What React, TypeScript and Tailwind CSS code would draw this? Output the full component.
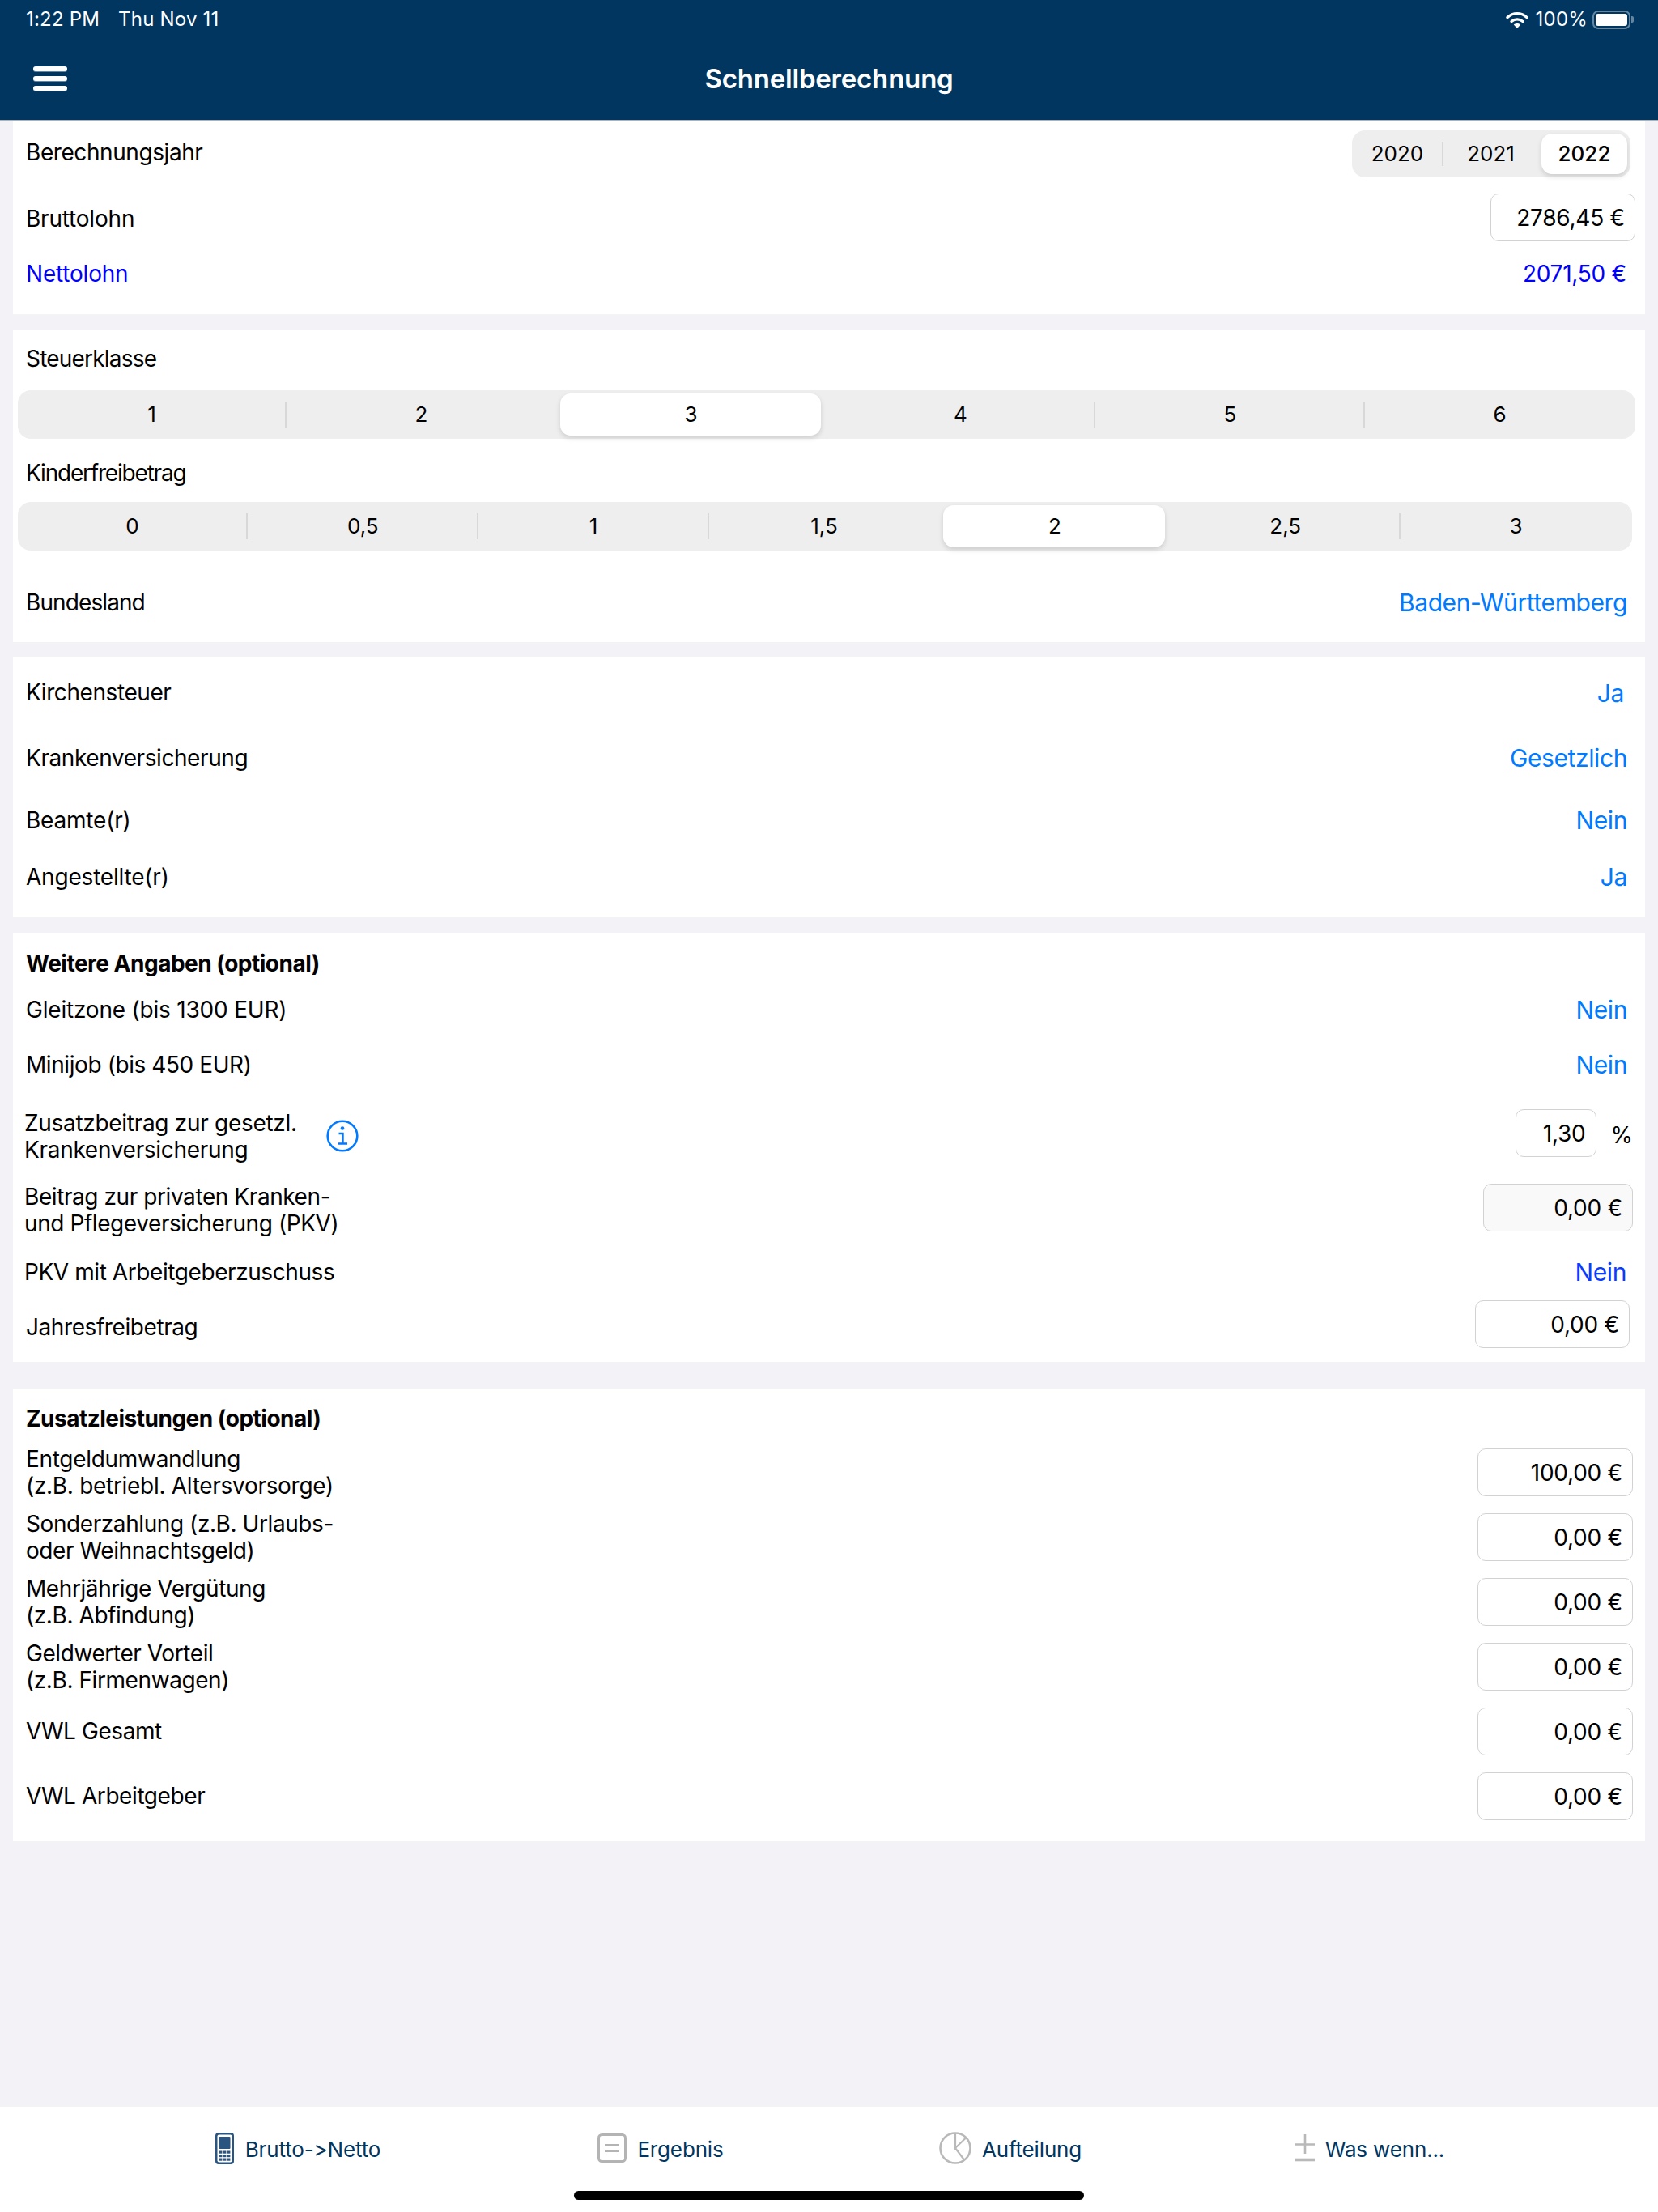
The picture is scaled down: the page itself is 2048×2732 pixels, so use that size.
import React from "react";

const FONT = "[font-family:Inter,'Noto_Sans',sans-serif]";

function Row({ className = "", children }: { className?: string; children: React.ReactNode }) {
  return <div className={"flex items-center justify-between " + className}>{children}</div>;
}

function Label({
  children,
  className = "",
  tone = "text-black",
  track = "tracking-[-0.42px]",
}: {
  children: React.ReactNode;
  className?: string;
  tone?: string;
  track?: string;
}) {
  return <div className={"text-[28px] leading-[33px] " + track + " " + tone + " " + className}>{children}</div>;
}

function Link({ children, className = "", tone = "text-[#007aff]" }: { children: React.ReactNode; className?: string; tone?: string }) {
  return <div className={"text-[30px] leading-[36px] tracking-[-0.4px] " + tone + " " + className}>{children}</div>;
}

function Field({ value, className = "" }: { value: string; className?: string }) {
  return (
    <div className={"flex h-[59px] items-center justify-end rounded-[10px] border border-[#d2d2d2] pr-[12px] text-[28px] tracking-[-0.25px] text-black " + className}>
      {value}
    </div>
  );
}

function Segmented({ items, selected, dividers, selectedInset, className = "" }: { items: string[]; selected: number; dividers: number[]; selectedInset: string; className?: string }) {
  return (
    <div className={"flex h-[60px] items-stretch rounded-[16px] bg-[#eeeeee] py-[4px] " + className}>
      {items.map((t, i) => (
        <div key={t} className="relative flex flex-1 items-center justify-center text-[26px] text-black">
          {i === selected && <div className={"absolute inset-y-0 rounded-[13px] bg-white shadow-[0_3px_6px_rgba(0,0,0,0.14)] " + selectedInset} />}
          <span className="relative -mt-[1px] -ml-[2px]">{t}</span>
          {dividers.includes(i) && <div className="absolute right-[1px] top-[10px] bottom-[10px] w-[2px] bg-[#d8d8d8]" />}
        </div>
      ))}
    </div>
  );
}

function Wifi() {
  return (
    <svg width="28" height="21" viewBox="0 0 28 21" fill="none" className="block">
      <path d="M2 7.5C9 1 19 1 26 7.5" stroke="white" strokeWidth="3.4" strokeLinecap="round" />
      <path d="M7 12.5C11 9 17 9 21 12.5" stroke="white" strokeWidth="3.4" strokeLinecap="round" />
      <path d="M14 21L9.8 16.4C12 14.4 16 14.4 18.2 16.4Z" fill="white" />
    </svg>
  );
}

function InfoIcon() {
  return (
    <svg width="40" height="40" viewBox="0 0 40 40" fill="none" className="block">
      <circle cx="20" cy="20" r="18.3" stroke="#007aff" strokeWidth="2.6" />
      <circle cx="20" cy="10.5" r="2.3" fill="#007aff" />
      <path d="M15.5 17H20.5V29M15 29.5H26" stroke="#007aff" strokeWidth="2.4" />
    </svg>
  );
}

function PhoneIcon() {
  return (
    <svg width="23" height="39" viewBox="0 0 23 39" className="block">
      <rect width="23" height="39" rx="4" fill="#2a5580" />
      <rect x="2.5" y="2.5" width="18" height="34" rx="2" fill="white" />
      <rect x="4.5" y="5" width="14" height="15" rx="1" fill="#2a5580" />
      {[22.5, 27, 31.5].map((y) =>
        [5, 10, 15].map((x) => <rect key={x + "-" + y} x={x} y={y} width="3.4" height="3.2" fill="#2a5580" />)
      )}
    </svg>
  );
}

function DocIcon() {
  return (
    <svg width="36" height="36" viewBox="0 0 36 36" fill="none" className="block">
      <rect x="1.5" y="1.5" width="33" height="33" rx="4" stroke="#b4b4b4" strokeWidth="3" />
      <path d="M9 14.5H27M9 21.5H27" stroke="#b4b4b4" strokeWidth="3" />
    </svg>
  );
}

function PieIcon() {
  return (
    <svg width="40" height="40" viewBox="0 0 40 40" fill="none" className="block">
      <circle cx="20" cy="20" r="18.5" stroke="#b9b9b9" strokeWidth="2.6" />
      <path d="M20 2V20L33 7.5M20 20L31 34.5" stroke="#b9b9b9" strokeWidth="2.2" />
    </svg>
  );
}

function PlusMinusIcon() {
  return (
    <svg width="24" height="34" viewBox="0 0 24 34" fill="none" className="block">
      <path d="M12 0V24M0 12.5H24" stroke="#b9b9b9" strokeWidth="2.6" />
      <path d="M0 31.5H24" stroke="#b9b9b9" strokeWidth="3.6" />
    </svg>
  );
}

function TabLabel({ children }: { children: React.ReactNode }) {
  return <span className="mt-[3px] text-[26px] tracking-[-0.15px] text-[#003660]">{children}</span>;
}

const WIDE = "tracking-[-0.2px]";

export default function App() {
  return (
    <div className={"flex h-[2732px] w-[2048px] flex-col overflow-hidden bg-[#f2f2f7] " + FONT}>
      <header className="h-[149px] shrink-0 border-b border-[#a8b4bf] bg-[#003660] text-white">
        <div className="flex h-[48px] items-center justify-between pl-[32px] pr-[30px] text-[24px] tracking-[0.2px]">
          <div className="flex gap-[23px]">
            <span>1:22 PM</span>
            <span>Thu Nov 11</span>
          </div>
          <div className="flex items-center">
            <Wifi />
            <span className="ml-[9px] mr-[6px]">100%</span>
            <div className="flex items-center gap-[1px]">
              <div className="h-[23px] w-[47px] rounded-[7px] border-2 border-white/40 p-[2px]">
                <div className="h-full w-full rounded-[3px] bg-white" />
              </div>
              <div className="h-[8px] w-[3px] rounded-r-[2px] bg-white/40" />
            </div>
          </div>
        </div>
        <div className="relative flex h-[100px] items-center justify-center">
          <div className="absolute left-[41px] top-[34px] flex flex-col gap-[6px]">
            <div className="h-[6px] w-[42px] rounded-[3px] bg-white shadow-[0_1px_0_rgba(255,255,255,0.4)]" />
            <div className="h-[6px] w-[42px] rounded-[3px] bg-white shadow-[0_1px_0_rgba(255,255,255,0.4)]" />
            <div className="h-[6px] w-[42px] rounded-[3px] bg-white shadow-[0_1px_0_rgba(255,255,255,0.4)]" />
          </div>
          <h1 className="text-[33px] font-semibold tracking-[-0.2px]">Schnellberechnung</h1>
        </div>
      </header>

      <main className="flex-1">
        {/* Section 1 */}
        <section className="mx-[16px] h-[239px] bg-white pl-[16px] pt-[12px]">
          <Row className="h-[58px] pr-[18px]">
            <Label className="-mt-[4px]">Berechnungsjahr</Label>
            <div className="flex h-[58px] w-[344px] items-stretch rounded-[16px] bg-[#eeeeee] p-[4px] text-[26px] text-black">
              <div className="my-[10px] flex w-[109px] items-center justify-center border-r-2 border-[#d8d8d8] pb-[2px] pr-[3px]">2020</div>
              <div className="flex w-[121px] items-center justify-center pb-[2px] pr-[4px]">2021</div>
              <div className="flex w-[106px] items-center justify-center rounded-[13px] bg-white pb-[2px] font-medium shadow-[0_3px_6px_rgba(0,0,0,0.14)]">2022</div>
            </div>
          </Row>
          <Row className="mt-[20px] h-[59px] pr-[12px]">
            <Label className="mt-[4px]" track={WIDE}>Bruttolohn</Label>
            <Field value="2786,45 €" className="w-[179px]" />
          </Row>
          <Row className="mt-[10px] h-[60px] pr-[23px]">
            <Label tone="text-[#0000ff]" track={WIDE}>Nettolohn</Label>
            <div className="text-[28px] tracking-[-0.25px] text-[#0000ff]">2071,50 €</div>
          </Row>
        </section>

        {/* Section 2 */}
        <section className="mx-[16px] mt-[20px] h-[385px] bg-white pt-[10px]">
          <Row className="h-[50px] pl-[16px]">
            <Label track="tracking-[-0.8px]">Steuerklasse</Label>
          </Row>
          <Segmented
            className="ml-[6px] mr-[12px] mt-[14px]"
            items={["1", "2", "3", "4", "5", "6"]}
            selected={2}
            dividers={[0, 3, 4]}
            selectedInset="left-[4px] right-[7px]"
          />
          <Row className="mt-[17px] h-[50px] pl-[16px]">
            <Label track="tracking-[-1.2px]">Kinderfreibetrag</Label>
          </Row>
          <Segmented
            className="ml-[6px] mr-[16px] mt-[11px]"
            items={["0", "0,5", "1", "1,5", "2", "2,5", "3"]}
            selected={4}
            dividers={[0, 1, 2, 5]}
            selectedInset="left-[4px] right-[7px]"
          />
          <Row className="mt-[34px] h-[60px] pl-[16px] pr-[22px]">
            <Label track="tracking-[-0.9px]">Bundesland</Label>
            <Link>Baden-Württemberg</Link>
          </Row>
        </section>

        {/* Section 3 */}
        <section className="mx-[16px] mt-[19px] h-[321px] bg-white pl-[16px] pr-[22px] pt-[14px]">
          <Row className="h-[60px]">
            <Label className="-mt-[2px]">Kirchensteuer</Label>
            <Link className="mr-[4px]">Ja</Link>
          </Row>
          <Row className="mt-[20px] h-[60px]">
            <Label>Krankenversicherung</Label>
            <Link>Gesetzlich</Link>
          </Row>
          <Row className="mt-[17px] h-[60px]">
            <Label track={WIDE}>Beamte(r)</Label>
            <Link>Nein</Link>
          </Row>
          <Row className="mt-[10px] h-[60px]">
            <Label track={WIDE}>Angestellte(r)</Label>
            <Link>Ja</Link>
          </Row>
        </section>

        {/* Section 4 */}
        <section className="mx-[16px] mt-[19px] h-[530px] bg-white pl-[16px] pr-[22px] pt-[14px]">
          <Row className="h-[48px]">
            <Label className="font-bold" track="tracking-[-0.5px]">Weitere Angaben (optional)</Label>
          </Row>
          <Row className="mt-[8px] h-[50px]">
            <Label track={WIDE}>Gleitzone (bis 1300 EUR)</Label>
            <Link>Nein</Link>
          </Row>
          <Row className="mt-[18px] h-[50px]">
            <Label>Minijob (bis 450 EUR)</Label>
            <Link>Nein</Link>
          </Row>
          <Row className="mt-[30px] h-[59px]">
            <div className="flex items-center">
              <Label className="-ml-[2px] mt-[9px] w-[373px]" track="tracking-[-0.3px]">
                Zusatzbeitrag zur gesetzl.
                <br />
                Krankenversicherung
              </Label>
              <div className="mt-[6px]">
                <InfoIcon />
              </div>
            </div>
            <div className="-mr-[7px] flex items-center">
              <Field value="1,30" className="w-[100px]" />
              <span className="ml-[18px] mt-[5px] text-[28px] text-black">%</span>
            </div>
          </Row>
          <Row className="mt-[33px] h-[59px]">
            <Label className="-ml-[2px] mt-[6px]">
              Beitrag zur privaten Kranken-
              <br />
              und Pflegeversicherung (PKV)
            </Label>
            <Field value="0,00 €" className="-mr-[7px] w-[185px] bg-[#f9f9f9]" />
          </Row>
          <Row className="mt-[20px] h-[60px]">
            <Label className="-ml-[2px]">PKV mit Arbeitgeberzuschuss</Label>
            <Link className="mr-[1px]" tone="text-[#0a3cff]">Nein</Link>
          </Row>
          <Row className="mt-[5px] h-[59px]">
            <Label className="mt-[8px]">Jahresfreibetrag</Label>
            <Field value="0,00 €" className="-mr-[3px] w-[191px]" />
          </Row>
        </section>

        {/* Section 5 */}
        <section className="mx-[16px] mt-[33px] h-[559px] bg-white pl-[16px] pr-[15px] pt-[14px]">
          <Row className="h-[46px]">
            <Label className="font-bold" track="tracking-[-0.5px]">Zusatzleistungen (optional)</Label>
          </Row>
          <Row className="mt-[14px] h-[59px]">
            <Label track="tracking-[-0.3px]">
              Entgeldumwandlung
              <br />
              (z.B. betriebl. Altersvorsorge)
            </Label>
            <Field value="100,00 €" className="w-[192px]" />
          </Row>
          <Row className="mt-[21px] h-[59px]">
            <Label>
              Sonderzahlung (z.B. Urlaubs-
              <br />
              oder Weihnachtsgeld)
            </Label>
            <Field value="0,00 €" className="w-[192px]" />
          </Row>
          <Row className="mt-[21px] h-[59px]">
            <Label>
              Mehrjährige Vergütung
              <br />
              (z.B. Abfindung)
            </Label>
            <Field value="0,00 €" className="w-[192px]" />
          </Row>
          <Row className="mt-[21px] h-[59px]">
            <Label>
              Geldwerter Vorteil
              <br />
              (z.B. Firmenwagen)
            </Label>
            <Field value="0,00 €" className="w-[192px]" />
          </Row>
          <Row className="mt-[21px] h-[59px]">
            <Label>VWL Gesamt</Label>
            <Field value="0,00 €" className="w-[192px]" />
          </Row>
          <Row className="mt-[21px] h-[59px]">
            <Label>VWL Arbeitgeber</Label>
            <Field value="0,00 €" className="w-[192px]" />
          </Row>
        </section>
      </main>

      <nav className="relative h-[130px] shrink-0 bg-white pl-[148px]">
        <div className="flex h-[100px] items-center pt-[2px]">
          <div className="flex w-[440px] items-center justify-center gap-[14px]">
            <PhoneIcon />
            <TabLabel>Brutto-&gt;Netto</TabLabel>
          </div>
          <div className="flex w-[456px] items-center justify-center gap-[13px]">
            <DocIcon />
            <TabLabel>Ergebnis</TabLabel>
          </div>
          <div className="flex w-[408px] items-center justify-center gap-[13px]">
            <PieIcon />
            <TabLabel>Aufteilung</TabLabel>
          </div>
          <div className="flex w-[480px] items-center justify-center gap-[13px]">
            <PlusMinusIcon />
            <TabLabel>Was wenn...</TabLabel>
          </div>
        </div>
        <div className="absolute bottom-[15px] left-[709px] h-[11px] w-[630px] rounded-full bg-black" />
      </nav>
    </div>
  );
}
